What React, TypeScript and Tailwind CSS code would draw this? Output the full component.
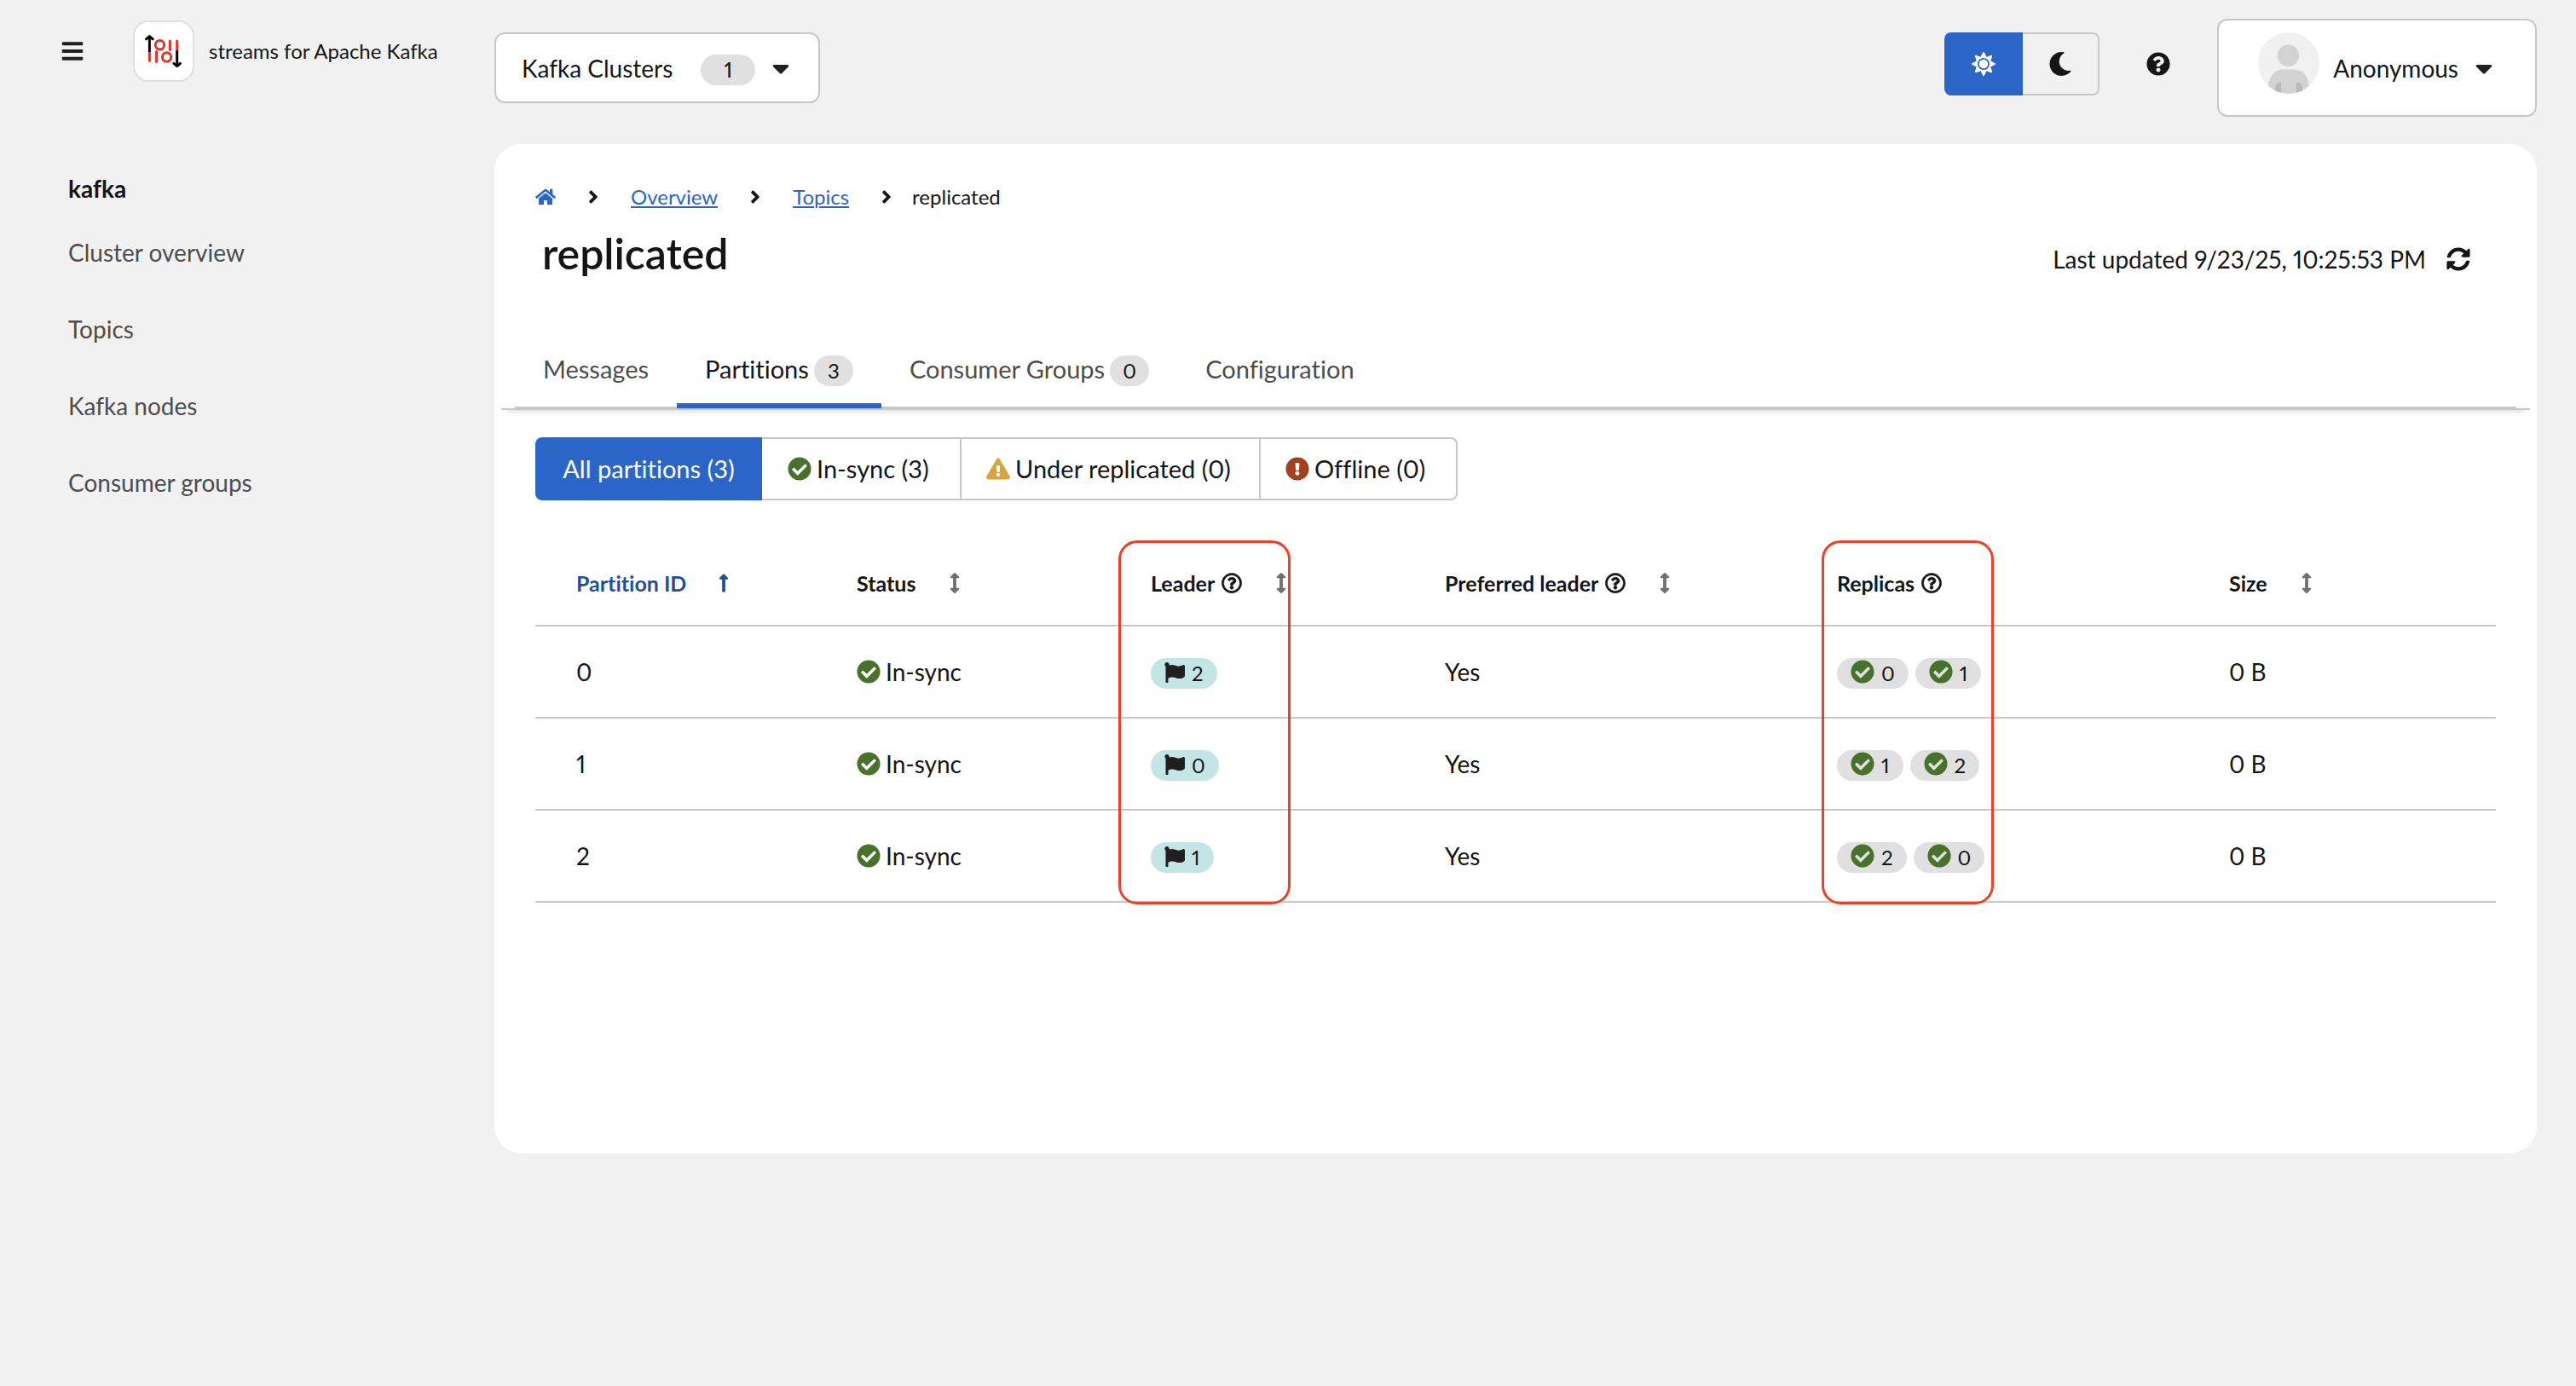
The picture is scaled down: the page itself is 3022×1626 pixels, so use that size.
import React from "react";
import {
  FaAngleRight,
  FaArrowsAltV,
  FaBars,
  FaCaretDown,
  FaCheckCircle,
  FaExclamationCircle,
  FaExclamationTriangle,
  FaFlag,
  FaHome,
  FaLongArrowAltUp,
  FaMoon,
  FaQuestionCircle,
  FaRegQuestionCircle,
  FaSun,
  FaSyncAlt,
} from "react-icons/fa";

type Partition = {
  id: number;
  leader: number;
  preferred: string;
  replicas: number[];
  size: string;
};

const partitions: Partition[] = [
  { id: 0, leader: 2, preferred: "Yes", replicas: [0, 1], size: "0 B" },
  { id: 1, leader: 0, preferred: "Yes", replicas: [1, 2], size: "0 B" },
  { id: 2, leader: 1, preferred: "Yes", replicas: [2, 0], size: "0 B" },
];

const navItems = ["Cluster overview", "Topics", "Kafka nodes", "Consumer groups"];

function Logo() {
  return (
    <svg viewBox="0 0 68 68" className="size-full" aria-hidden="true" fill="none">
      <g stroke="#e0342a" strokeWidth="3">
        <path d="M17.4 34.5V46.5" />
        <path d="M25.6 34.5V46.5" strokeLinecap="round" />
        <path d="M41.4 22V32.5" strokeLinecap="round" />
        <path d="M49.7 22V34" strokeLinecap="round" />
        <circle cx="29.5" cy="26.7" r="5.2" />
        <circle cx="37.6" cy="41" r="5.2" />
      </g>
      <g stroke="#000" strokeWidth="3">
        <path d="M17.4 17V35" />
        <path d="M13.6 19.8L17.4 16.6L21.2 19.8" strokeLinecap="round" strokeLinejoin="round" />
        <path d="M49.7 33.3V51" />
        <path d="M45.9 48.4L49.7 51.6L53.5 48.4" strokeLinecap="round" strokeLinejoin="round" />
      </g>
    </svg>
  );
}

function Avatar() {
  return (
    <svg viewBox="0 0 72 72" className="mb-3 size-[72px] shrink-0" aria-hidden="true">
      <clipPath id="avatar-clip">
        <circle cx="36" cy="36" r="36" />
      </clipPath>
      <g clipPath="url(#avatar-clip)">
        <rect width="72" height="72" fill="#f0f0f0" />
        <circle cx="35.5" cy="27.3" r="12.7" fill="#d2d2d2" />
        <path d="M12 64C13 50 20 43.5 30 43.5H42C52 43.5 59 50 60 64V72H12Z" fill="#d2d2d2" />
        <path d="M20 72V66C20 61.500 22 59 27 58.500V72Z" fill="#b8bbbe" />
        <path d="M52 72V66C52 61.500 50 59 45 58.500V72Z" fill="#b8bbbe" />
      </g>
    </svg>
  );
}

function Masthead() {
  return (
    <header className="flex items-start pr-[46px]">
      <div className="flex w-[580px] shrink-0 items-center pt-6 pl-[57px]">
        <button type="button" aria-label="Global navigation" className="flex size-14 items-center justify-center">
          <FaBars className="size-7 text-[#1f1f1f]" />
        </button>
        <a href="#home" className="ml-[43px] flex items-center gap-[17px]">
          <span className="size-[72px] rounded-[18px] border-2 border-[#e0e0e0] bg-white">
            <Logo />
          </span>
          <span className="text-2xl whitespace-nowrap">streams for Apache Kafka</span>
        </a>
      </div>

      <button
        type="button"
        aria-haspopup="menu"
        className="mt-[38px] flex h-[83px] items-center rounded-xl border-2 border-[#c7c7c7] bg-white pr-[34px] pl-[30px]"
      >
        <span>Kafka Clusters</span>
        <span className="mt-1 ml-[33px] flex h-9 w-16 items-center justify-center rounded-full bg-[#e0e0e0] text-2xl font-medium">
          1
        </span>
        <FaCaretDown className="ml-5 h-8 w-5 text-[#1f1f1f]" />
      </button>

      <div className="ml-auto flex items-start">
        <div role="group" aria-label="Theme" className="mt-[38px] flex h-[74px]">
          <button
            type="button"
            aria-label="Light theme"
            aria-pressed="true"
            className="flex w-[92px] items-center justify-center rounded-l-lg bg-[#2b65c7] text-white"
          >
            <FaSun className="size-7" />
          </button>
          <button
            type="button"
            aria-label="Dark theme"
            aria-pressed="false"
            className="flex w-[90px] items-center justify-center rounded-r-lg border-y-2 border-r-2 border-[#c7c7c7]"
          >
            <FaMoon className="size-7" />
          </button>
        </div>
        <button type="button" aria-label="Help" className="mt-[47px] ml-[41px] flex size-14 items-center justify-center">
          <FaQuestionCircle className="size-7" />
        </button>
        <button
          type="button"
          aria-haspopup="menu"
          className="mt-[22px] ml-[41px] flex h-[115px] items-center rounded-xl border-2 border-[#c7c7c7] bg-white pr-[50px] pl-[46px]"
        >
          <Avatar />
          <span className="ml-4">Anonymous</span>
          <FaCaretDown className="ml-5 h-8 w-5 text-[#1f1f1f]" />
        </button>
      </div>
    </header>
  );
}

function Sidebar() {
  return (
    <nav aria-label="Cluster" className="w-[580px] shrink-0 pt-8 pl-20">
      <h2 className="leading-10 font-bold">kafka</h2>
      <ul className="mt-2.5 text-[#4d4d4d]">
        {navItems.map((item) => (
          <li key={item}>
            <a href="#nav" className="flex h-[90px] items-center">
              {item}
            </a>
          </li>
        ))}
      </ul>
    </nav>
  );
}

function Breadcrumb() {
  return (
    <nav aria-label="Breadcrumb" className="px-12 text-2xl leading-9">
      <ol className="flex items-center">
        <li>
          <a href="#home" aria-label="Home" className="text-[#2b65c7]">
            <FaHome className="size-6" />
          </a>
        </li>
        <li className="flex items-center">
          <FaAngleRight className="mx-[38px] h-6 w-3" />
          <a href="#overview" className="text-[#2b65c7] underline decoration-2 underline-offset-2">
            Overview
          </a>
        </li>
        <li className="flex items-center">
          <FaAngleRight className="mx-[38px] h-6 w-3" />
          <a href="#topics" className="text-[#2b65c7] underline decoration-2 underline-offset-2">
            Topics
          </a>
        </li>
        <li className="flex items-center">
          <FaAngleRight className="mr-6 ml-[38px] h-6 w-3" />
          <span aria-current="page">replicated</span>
        </li>
      </ol>
    </nav>
  );
}

function Tab({ label, count, active }: { label: string; count?: number; active?: boolean }) {
  return (
    <button
      type="button"
      role="tab"
      aria-selected={active ? "true" : "false"}
      className={
        active
          ? "flex h-[92px] items-center gap-1.5 border-y-[6px] border-t-transparent border-b-[#2b65c7] px-[33px]"
          : "flex h-[92px] items-center gap-1.5 px-[33px] text-[#4d4d4d]"
      }
    >
      {label}
      {count !== undefined && (
        <span className="mt-1 flex h-9 w-[46px] items-center justify-center rounded-full bg-[#e0e0e0] text-2xl text-[#151515]">
          {count}
        </span>
      )}
    </button>
  );
}

function Filters() {
  return (
    <div role="group" aria-label="Partition status" className="flex h-[74px] text-[29px]">
      <button
        type="button"
        aria-pressed="true"
        className="flex w-[266px] items-center justify-center rounded-l-lg bg-[#2b65c7] text-white"
      >
        All partitions (3)
      </button>
      <button
        type="button"
        aria-pressed="false"
        className="flex w-[234px] items-center gap-1.5 border-y-2 border-r-2 border-[#c7c7c7] pl-[30px]"
      >
        <FaCheckCircle className="size-7 text-[#48722b]" />
        In-sync (3)
      </button>
      <button
        type="button"
        aria-pressed="false"
        className="flex w-[351px] items-center gap-1.5 border-y-2 border-r-2 border-[#c7c7c7] pl-[29px]"
      >
        <FaExclamationTriangle className="size-7 text-[#d6a53b]" />
        Under replicated (0)
      </button>
      <button
        type="button"
        aria-pressed="false"
        className="flex w-[231px] items-center gap-1.5 rounded-r-lg border-y-2 border-r-2 border-[#c7c7c7] pl-[29px]"
      >
        <FaExclamationCircle className="size-7 text-[#a5401f]" />
        Offline (0)
      </button>
    </div>
  );
}

function HeaderCell({
  label,
  help,
  sort,
  first,
}: {
  label: string;
  help?: boolean;
  sort?: "active" | "idle";
  first?: boolean;
}) {
  const color = sort === "active" ? "text-[#1f4e9c]" : "text-[#151515]";
  return (
    <th scope="col" className={first ? "pr-8 pl-12 text-left font-bold" : "px-8 text-left font-bold"}>
      <span className={`flex items-center whitespace-nowrap ${color}`}>
        {label}
        {help && (
          <button type="button" aria-label={`More info about ${label}`} className="ml-2">
            <FaRegQuestionCircle className="size-6 stroke-current stroke-[12]" />
          </button>
        )}
        {sort === "active" && (
          <button type="button" aria-label={`Sort by ${label}`} className="ml-[38px]">
            <FaLongArrowAltUp className="h-6 w-3" />
          </button>
        )}
        {sort === "idle" && (
          <button type="button" aria-label={`Sort by ${label}`} className="ml-10 text-[#707070]">
            <FaArrowsAltV className="h-6 w-3" />
          </button>
        )}
      </span>
    </th>
  );
}

function PartitionsTable() {
  return (
    <div className="relative">
      <table className="w-full table-fixed border-separate border-spacing-0 [&_td]:border-b-2 [&_td]:border-[#c7c7c7] [&_th]:border-b-2 [&_th]:border-[#c7c7c7]">
        <colgroup>
          <col className="w-[15%]" />
          <col className="w-[15%]" />
          <col className="w-[15%]" />
          <col className="w-[20%]" />
          <col className="w-[20%]" />
          <col className="w-[15%]" />
        </colgroup>
        <thead>
          <tr className="h-[100px] text-[25px]">
            <HeaderCell label="Partition ID" sort="active" first />
            <HeaderCell label="Status" sort="idle" />
            <HeaderCell label="Leader" help sort="idle" />
            <HeaderCell label="Preferred leader" help sort="idle" />
            <HeaderCell label="Replicas" help />
            <HeaderCell label="Size" sort="idle" />
          </tr>
        </thead>
        <tbody>
          {partitions.map((p) => (
            <tr key={p.id} className="h-[108px]">
              <td className="pr-8 pl-12">{p.id}</td>
              <td className="px-8">
                <span className="flex items-center gap-1.5">
                  <FaCheckCircle className="size-7 text-[#48722b]" />
                  In-sync
                </span>
              </td>
              <td className="px-8">
                <span className="mt-1 flex h-9 w-fit items-center gap-2 rounded-full bg-[#c3e5e5] px-4 text-2xl">
                  <FaFlag className="mb-0.5 size-6 text-[#1f1f1f]" />
                  {p.leader}
                </span>
              </td>
              <td className="px-8">{p.preferred}</td>
              <td className="px-8">
                <span className="mt-1 flex gap-2 text-2xl">
                  {p.replicas.map((r) => (
                    <span key={r} className="flex h-9 items-center gap-2 rounded-full bg-[#e0e0e0] px-4">
                      <FaCheckCircle className="mb-1 size-7 text-[#48722b]" />
                      {r}
                    </span>
                  ))}
                </span>
              </td>
              <td className="px-8">{p.size}</td>
            </tr>
          ))}
        </tbody>
      </table>
      <div className="pointer-events-none absolute -top-px -bottom-0.5 left-[calc(30%-6px)] w-[202px] rounded-[22px] border-[3px] border-[#ee4027]" />
      <div className="pointer-events-none absolute -top-px -bottom-0.5 left-[calc(65%+14px)] w-[202px] rounded-[22px] border-[3px] border-[#ee4027]" />
    </div>
  );
}

export default function App() {
  return (
    <div className="min-h-screen bg-[#f1f1f1] font-['Lato','Noto_Sans',sans-serif] text-[28px] leading-9 text-[#151515] proportional-nums [font-variant-ligatures:none]">
      <Masthead />
      <div className="mt-8 flex items-start pr-[46px]">
        <Sidebar />
        <main className="min-w-0 flex-1 rounded-[32px] bg-white pt-11 pb-[294px]">
          <Breadcrumb />
          <div className="mt-5 flex items-start justify-between pr-[78px] pl-14">
            <h1 className="text-[50px] leading-14 font-semibold">replicated</h1>
            <div className="mt-[17px] flex items-center gap-6">
              <span>Last updated 9/23/25, 10:25:53 PM</span>
              <button type="button" aria-label="Refresh">
                <FaSyncAlt className="size-7" />
              </button>
            </div>
          </div>

          <div className="mx-2 mt-[62px] border-b-2 border-[#c7c7c7] px-4 shadow-[0_8px_6px_-6px_rgba(0,0,0,0.14)]">
            <div role="tablist" className="flex border-b-2 border-[#c7c7c7] text-[29px]">
              <div className="-mb-0.5 flex">
                <Tab label="Messages" />
                <Tab label="Partitions" count={3} active />
                <Tab label="Consumer Groups" count={0} />
                <Tab label="Configuration" />
              </div>
            </div>
          </div>

          <div className="flex flex-col gap-12 px-12 pt-8">
            <Filters />
            <PartitionsTable />
          </div>
        </main>
      </div>
    </div>
  );
}
